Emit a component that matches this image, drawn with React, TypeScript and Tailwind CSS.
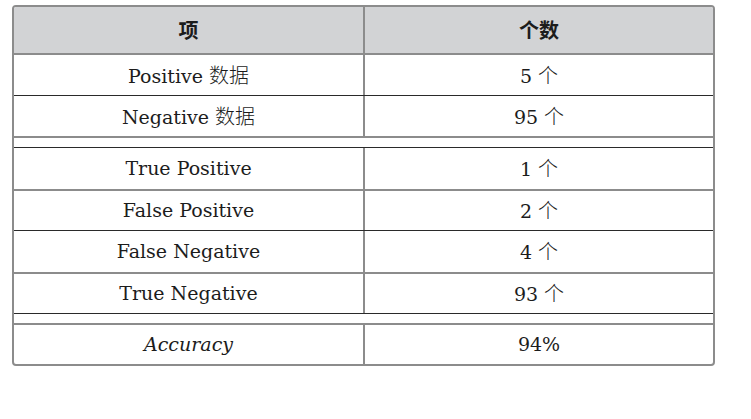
type Row = {
  left: React.ReactNode;
  right: React.ReactNode;
  h: string;
  line: string;
};

const Zh = ({ children }: { children: React.ReactNode }) => (
  <span className="[font-family:'Noto_Sans_CJK_SC',sans-serif] text-[20px] font-light">{children}</span>
);

const dark = "border-b border-[#2a2a2a]";
const gray = "border-b-2 border-[#8c8c8c]";

const rows: (Row | { gap: true; h: string; line: string })[] = [
  { left: <>Positive <Zh>数据</Zh></>, right: <>5 <Zh>个</Zh></>, h: "h-[40px]", line: dark },
  { left: <>Negative <Zh>数据</Zh></>, right: <>95 <Zh>个</Zh></>, h: "h-[40px]", line: gray },
  { gap: true, h: "h-[9px]", line: dark },
  { left: "True Positive", right: <>1 <Zh>个</Zh></>, h: "h-[41px]", line: gray },
  { left: "False Positive", right: <>2 <Zh>个</Zh></>, h: "h-[39px]", line: dark },
  { left: "False Negative", right: <>4 <Zh>个</Zh></>, h: "h-[41px]", line: gray },
  { left: "True Negative", right: <>93 <Zh>个</Zh></>, h: "h-[39px]", line: dark },
  { gap: true, h: "h-[9px]", line: gray },
  { left: <span className="italic">Accuracy</span>, right: "94%", h: "h-[39px]", line: "" },
];

export default function App() {
  return (
    <div className="w-[751px] h-[419px] bg-white pt-[5px] pl-[12px]">
      <div className="w-[703px] border-2 border-[#8c8c8c] rounded-[4px] overflow-hidden text-[19px] text-[#1c1c1c] [font-family:'DejaVu_Serif',serif]">
        {/* header */}
        <div className="flex h-[46px] box-content bg-[#d2d3d5] border-b-2 border-[#8c8c8c] [font-family:'Noto_Sans_CJK_SC',sans-serif] font-bold text-[20px]">
          <div className="w-[349px] box-content border-r-2 border-[#8c8c8c] flex items-center justify-center">项</div>
          <div className="flex-1 flex items-center justify-center">个数</div>
        </div>
        {rows.map((r, i) =>
          "gap" in r ? (
            <div key={i} className={`${r.h} ${r.line} box-content`} />
          ) : (
            <div key={i} className={`flex ${r.line} box-content`}>
              <div className={`${r.h} w-[349px] border-r-2 border-[#8c8c8c] flex items-center justify-center box-content`}>
                <span>{r.left}</span>
              </div>
              <div className={`${r.h} flex-1 flex items-center justify-center`}>
                <span>{r.right}</span>
              </div>
            </div>
          )
        )}
      </div>
    </div>
  );
}
